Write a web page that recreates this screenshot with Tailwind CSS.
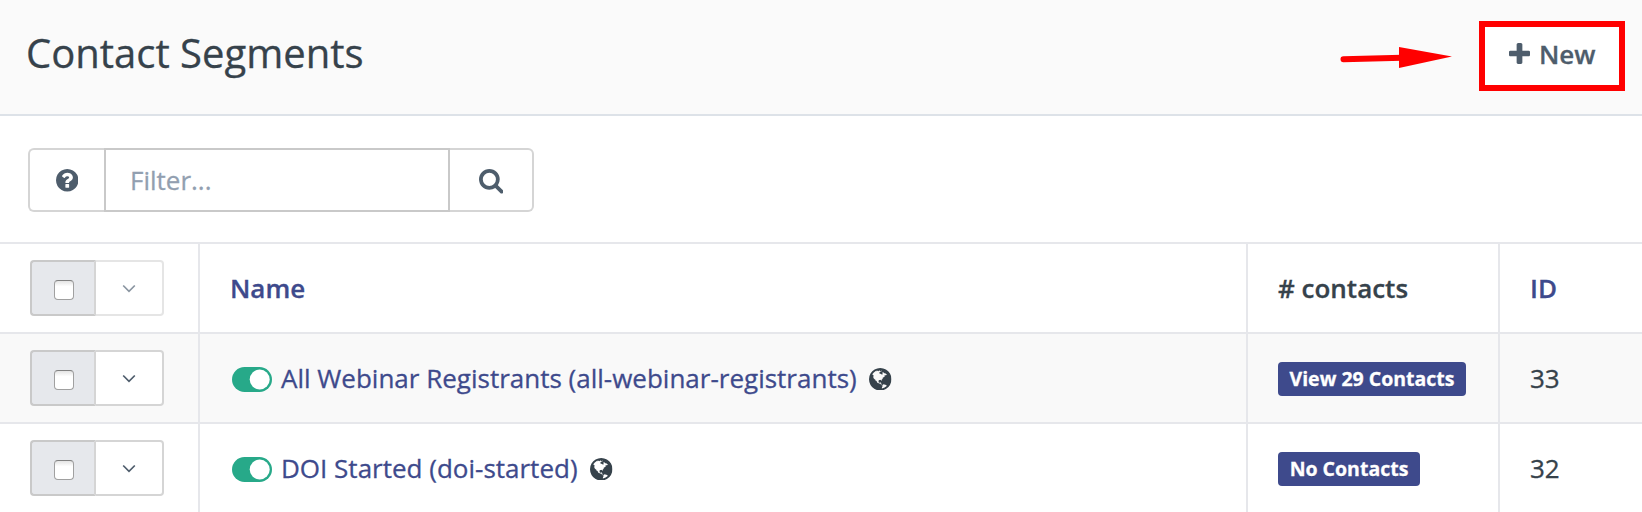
<!DOCTYPE html>
<html lang="en">
<head>
<meta charset="utf-8">
<title>Contact Segments</title>
<script src="https://cdn.jsdelivr.net/npm/@tailwindcss/browser@4"></script>
</head>
<body class="w-[1642px] h-[512px] overflow-hidden bg-white font-['Open_Sans',sans-serif] text-[26px] leading-[36px] text-[#36424b] [-webkit-text-stroke:0.3px]">
<svg class="hidden">
  <symbol id="globe" viewBox="128 128 1536 1536"><path d="M896 128q209 0 385.5 103t279.5 279.5 103 385.5-103 385.5-279.5 279.5-385.5 103-385.5-103-279.5-279.5-103-385.5 103-385.5 279.5-279.5 385.5-103zm274 521q-2 1-9.5 9.5t-13.5 9.5q2 0 4.5-5t5-11 3.5-7q6-7 22-15 14-6 52-12 34-8 51 11-2-2 9.5-13t14.5-12q3-2 15-4.5t15-7.5l2-22q-12 1-17.5-7t-6.5-21q0 2-6 8 0-7-4.5-8t-11.5 1-9 1q-10-3-15-7.5t-8-16.5-4-15q-2-5-9.5-11t-9.5-10q-1-2-2.5-5.5t-3-6.5-4-5.5-5.5-2.5-7 5-7.5 10-4.5 5q-3-2-6-1.5t-4.5 1-4.5 3-5 3.5q-3 2-8.5 3t-8.5 2q15-5-1-11-10-4-16-3 9-4 7.5-12t-8.5-14h5q-1-4-8.5-8.5t-17.5-8.5-13-6q-8-5-34-9.5t-33-.5q-5 6-4.5 10.5t4 14 3.5 12.5q1 6-5.5 13t-6.5 12q0 7 14 15.5t10 21.5q-3 8-16 16t-16 12q-5 8-1.5 18.5t10.5 16.5q2 2 1.5 4t-3.5 4.5-5.5 4-6.5 3.5l-3 2q-11 5-20.5-6t-13.5-26q-7-25-16-30-23-8-29 1-5-13-41-26-25-9-58-4 6-1 0-15-7-15-19-12 3-6 4-17.5t1-13.5q3-13 12-23 1-1 7-8.5t9.5-13.5.5-6q35 4 50-11 5-5 11.5-17t10.5-17q9-6 14-5.5t14.5 5.5 14.5 5q14 1 15.5-11t-7.5-20q12 1 3-17-4-7-8-9-12-4-27 5-8 4 2 8-1-1-9.5 10.5t-16.5 17.5-16-5q-1-1-5.5-13.5t-9.5-13.5q-8 0-16 15 3-8-11-15t-24-8q19-12-8-27-7-4-20.5-5t-19.5 4q-5 7-5.5 11.5t5 8 10.5 5.5 11.5 4 8.5 3q14 10 8 14-2 1-8.5 3.5t-11.5 4.5-6 4q-3 4 0 14t-2 14q-5-5-9-17.5t-7-16.5q7 9-25 6l-10-1q-4 0-16 2t-20.5 1-13.5-8q-4-8 0-20 1-4 4-2-4-3-11-9.5t-10-8.5q-46 15-94 41 6 1 12-1 5-2 13-6.5t10-5.5q34-14 42-7l5-5q14 16 20 25-7-4-30-1-20 6-22 12 7 12 5 18-4-3-11.5-10t-14.5-11-15-5q-16 0-22 1-146 80-235 222 7 7 12 8 4 1 5 9t2.5 11 11.5-3q9 8 3 19 1-1 44 27 19 17 21 21 3 11-10 18-1-2-9-9t-9-4q-3 5 .5 18.5t10.5 12.5q-7 0-9.5 16t-2.5 35.5-1 23.5l2 1q-3 12 5.5 34.5t21.5 19.5q-13 3 20 43 6 8 8 9 3 2 12 7.5t15 10 10 10.5q4 5 10 22.5t14 23.5q-2 6 9.5 20t10.5 23q-1 0-2.5 1t-2.5 1q3 7 15.5 14t15.5 13q1 3 2 10t3 11 8 2q2-20-24-62-15-25-17-29-3-5-5.5-15.5t-4.5-14.5q2 0 6 1.5t8.5 3.5 7.5 4 2 3q-3 7 2 17.5t12 18.5 17 19 12 13q6 6 14 19.5t0 13.5q9 0 20 10.5t17 19.5q5 8 8 26t5 24q2 7 8.5 13.5t12.5 9.5l16 8 13 7q5 2 18.5 10.5t21.5 11.5q10 4 16 4t14.5-2.5 13.5-3.5q15-2 29 15t21 21q36 19 55 11-2 1 .5 7.5t8 15.5 9 14.5 5.5 8.5q5 6 18 15t18 15q6-4 7-9-3 8 7 20t18 10q14-3 14-32-31 15-49-18 0-1-2.5-5.5t-4-8.5-2.5-8.5 0-7.5 5-3q9 0 10-3.5t-2-12.5-4-13q-1-8-11-20t-12-15q-5 9-16 8t-16-9q0 1-1.5 5.5t-1.5 6.5q-13 0-15-1 1-3 2.5-17.5t3.5-22.5q1-4 5.5-12t7.5-14.5 4-12.5-4.5-9.5-17.5-2.5q-19 1-26 20-1 3-3 10.5t-5 11.5-9 7q-7 3-24 2t-24-5q-13-8-22.5-29t-9.5-37q0-10 2.5-26.5t3-25-5.5-24.5q3-2 9-9.5t10-10.5q2-1 4.5-1.5t4.5 0 4-1.5 3-6q-1-1-4-3-3-3-4-3 7 3 28.5-1.5t27.5 1.5q15 11 22-2 0-1-2.5-9.5t-.5-13.5q5 27 29 9 3 3 15.5 5t17.5 5q3 2 7 5.5t5.5 4.5 5-.5 8.5-6.5q10 14 12 24 11 40 19 44 7 3 11 2t4.5-9.5 0-14-1.5-12.5l-1-8v-18l-1-8q-15-3-18.5-12t1.5-18.5 15-18.5q1-1 8-3.5t15.5-6.5 12.5-8q21-19 15-35 7 0 11-9-1 0-5-3t-7.5-5-4.5-2q9-5 2-16 5-3 7.5-11t7.5-10q9 12 21 2 7-8 1-16 5-7 20.5-10.5t18.5-9.5q7 2 8-2t1-12 3-12q4-5 15-9t13-5l17-11q3-4 0-4 18 2 31-11 10-11-6-20 3-6-3-9.5t-15-5.5q3-1 11.5-.5t10.5-1.5q15-10-7-16-17-5-43 12zm-163 877q206-36 351-189-3-3-12.5-4.5t-12.5-3.5q-18-7-24-8 1-7-2.5-13t-8-9-12.5-8-11-7q-2-2-7-6t-7-5.5-7.5-4.5-8.5-2-10 1l-3 1q-3 1-5.5 2.5t-5.5 3-4 3 0 2.5q-21-17-36-22-5-1-11-5.5t-10.5-7-10-1.5-11.5 7q-5 5-6 15t-2 13q-7-5 0-17.5t2-18.5q-3-6-10.5-4.5t-12 4.5-11.5 8.5-9 6.5-8.5 5.5-8.5 7.5q-3 4-6 12t-5 11q-2-4-11.5-6.5t-9.5-5.5q2 10 4 35t5 38q7 31-12 48-27 25-29 40-4 22 12 26 0 7-8 20.5t-7 21.5q0 6 2 16z"/></symbol>
  <symbol id="toggle" viewBox="0 0 40 25"><rect width="40" height="25" rx="12.5"/><circle cx="27.7" cy="12.5" r="10" fill="#fff"/></symbol>
  <symbol id="chevron" viewBox="0 0 14 9"><path d="M1.200 1.500 7 7.300l5.800-5.800" fill="none" stroke="currentColor" stroke-width="1.700"/></symbol>
</svg>

<header class="flex h-[116px] items-start justify-between border-b-2 border-[#dde2e8] bg-[#fafafa] pl-[26px] pr-[17px]">
  <h1 class="pt-[25px] text-[40px] leading-[56px]">Contact Segments</h1>
  <div class="flex pt-[21px]">
    <svg class="mt-[25px] mr-[27px] h-[24px] w-[112px]" viewBox="0 0 112 24" fill="#f00"><path d="M3.500 13.200 62 11.800" stroke="#f00" stroke-width="6" stroke-linecap="round"/><path d="M59 1 112 10.500 59 22z"/></svg>
    <button class="flex h-[70px] w-[146px] items-center border-6 border-[#f00] bg-white pl-[24px] font-semibold text-[#4e5d6c]">
      <svg class="mb-[5px] mr-[9px] size-[21px]" viewBox="192 128 1408 1408" fill="currentColor"><path d="M1600 736v192q0 40-28 68t-68 28h-416v416q0 40-28 68t-68 28h-192q-40 0-68-28t-28-68v-416h-416q-40 0-68-28t-28-68v-192q0-40 28-68t68-28h416v-416q0-40 28-68t68-28h192q40 0 68 28t28 68v416h416q40 0 68 28t28 68z"/></svg>
      <span class="mb-[5px]">New</span>
    </button>
  </div>
</header>

<div class="flex h-[126px] px-[28px] pt-[32px]">
  <div class="flex h-[64px] w-[506px]">
    <button class="flex w-[76px] items-center justify-center rounded-l-[6px] border-2 border-r-0 border-[#d5d5d5] text-[#4e5d6c]">
      <svg class="mt-[1px] size-[22.500px]" viewBox="128 128 1536 1536" fill="currentColor"><path d="M1024 1376v-192q0-14-9-23t-23-9h-192q-14 0-23 9t-9 23v192q0 14 9 23t23 9h192q14 0 23-9t9-23zm256-672q0-88-55.500-163t-138.500-116-170-41q-243 0-371 213-15 24 8 42l132 100q7 6 19 6 16 0 25-12 53-68 86-92 34-24 86-24 48 0 85.500 26t37.500 59q0 38-20 61t-68 45q-63 28-115.500 86.500t-52.500 125.500v36q0 14 9 23t23 9h192q14 0 23-9t9-23q0-19 21.500-49.500t54.500-49.500q32-18 49-28.500t46-35 44.500-48 28-60.500 12.500-81zm384 192q0 209-103 385.500t-279.500 279.500-385.500 103-385.500-103-279.500-279.500-103-385.500 103-385.500 279.500-279.500 385.500-103 385.500 103 279.500 279.500 103 385.500z"/></svg>
    </button>
    <input type="text" placeholder="Filter..." class="w-[346px] border-2 border-[#c9c9c9] pl-[24px] placeholder:text-[#929fb0]">
    <button class="flex w-[84px] items-center rounded-r-[6px] border-2 border-l-0 border-[#d5d5d5] pl-[28.500px] text-[#4e5d6c]">
      <svg class="mt-[3px] size-[24.500px]" viewBox="64 128 1664 1664" fill="currentColor"><path d="M1216 832q0-185-131.500-316.500t-316.500-131.500-316.500 131.500-131.500 316.500 131.500 316.500 316.500 131.500 316.500-131.500 131.500-316.500zm512 832q0 52-38 90t-90 38q-54 0-90-38l-343-342q-179 124-399 124-143 0-273.500-55.500t-225-150-150-225-55.500-273.500 55.500-273.500 150-225 225-150 273.500-55.500 273.500 55.500 225 150 150 225 55.500 273.500q0 220-124 399l343 343q37 37 37 90z"/></svg>
    </button>
  </div>
</div>

<main class="w-[1642px]">
  <div class="grid h-[90px] grid-cols-[200px_1048px_252px_142px] border-t-2 border-[#e6e7eb] font-semibold *:flex *:items-center">
    <div class="border-r-2 border-[#e6e7eb] pl-[30px]">
      <div class="flex h-[56px] w-[134px]">
        <span class="flex w-[66px] rounded-l-[4px] border-2 border-[#c9c9c9] border-r-[#d5d5d5] bg-[#e6e8ec] pl-[22px] pt-[18px]"><input type="checkbox" class="size-[20px] appearance-none rounded-[4px] border-[1.500px] border-[#a0a0a0] border-t-[#808080] bg-linear-to-b from-[#e4e4e4] to-white to-30%"></span>
        <button class="flex w-[68px] items-center rounded-r-[4px] border-2 border-l-0 border-[#e5e5e5] bg-white pl-[26px] text-[#8a95a1]"><svg class="h-[9px] w-[14px]"><use href="#chevron"/></svg></button>
      </div>
    </div>
    <div class="border-r-2 border-[#e6e7eb] pl-[30px] text-[#3e4a8c]">Name</div>
    <div class="border-r-2 border-[#e6e7eb] pl-[30px]"># contacts</div>
    <div class="pl-[30px] text-[#3e4a8c]">ID</div>
  </div>

  <div class="grid h-[90px] grid-cols-[200px_1048px_252px_142px] border-t-2 border-[#e6e7eb] bg-[#f9f9f9] *:flex *:items-center">
    <div class="border-r-2 border-[#e6e7eb] pl-[30px]">
      <div class="flex h-[56px] w-[134px]">
        <span class="flex w-[66px] rounded-l-[4px] border-2 border-[#c9c9c9] border-r-[#d5d5d5] bg-[#e6e8ec] pl-[22px] pt-[18px]"><input type="checkbox" class="size-[20px] appearance-none rounded-[4px] border-[1.500px] border-[#a0a0a0] border-t-[#808080] bg-linear-to-b from-[#e4e4e4] to-white to-30%"></span>
        <button class="flex w-[68px] items-center rounded-r-[4px] border-2 border-l-0 border-[#d5d5d5] bg-white pl-[26px] text-[#4e5d6c]"><svg class="h-[9px] w-[14px]"><use href="#chevron"/></svg></button>
      </div>
    </div>
    <div class="border-r-2 border-[#e6e7eb] pl-[32px]">
      <svg class="mt-[3px] mr-[9px] h-[25px] w-[40px]" fill="#27a989"><use href="#toggle"/></svg>
      <a class="text-[#3e4a8c]">All Webinar Registrants (all-webinar-registrants)</a>
      <svg class="mt-[2px] ml-[12.500px] size-[22.500px]" fill="currentColor"><use href="#globe"/></svg>
    </div>
    <div class="border-r-2 border-[#e6e7eb] pl-[30px]"><a class="mt-[2px] flex h-[34px] w-[188px] items-center justify-center rounded-[4px] bg-[#3e4a8c] text-[19.500px] font-bold text-white text-shadow-2xs">View 29 Contacts</a></div>
    <div class="pl-[30px]">33</div>
  </div>

  <div class="grid h-[90px] grid-cols-[200px_1048px_252px_142px] border-t-2 border-[#e6e7eb] *:flex *:items-center">
    <div class="border-r-2 border-[#e6e7eb] pl-[30px]">
      <div class="flex h-[56px] w-[134px]">
        <span class="flex w-[66px] rounded-l-[4px] border-2 border-[#c9c9c9] border-r-[#d5d5d5] bg-[#e6e8ec] pl-[22px] pt-[18px]"><input type="checkbox" class="size-[20px] appearance-none rounded-[4px] border-[1.500px] border-[#a0a0a0] border-t-[#808080] bg-linear-to-b from-[#e4e4e4] to-white to-30%"></span>
        <button class="flex w-[68px] items-center rounded-r-[4px] border-2 border-l-0 border-[#d5d5d5] bg-white pl-[26px] text-[#4e5d6c]"><svg class="h-[9px] w-[14px]"><use href="#chevron"/></svg></button>
      </div>
    </div>
    <div class="border-r-2 border-[#e6e7eb] pl-[32px]">
      <svg class="mt-[3px] mr-[9px] h-[25px] w-[40px]" fill="#27a989"><use href="#toggle"/></svg>
      <a class="text-[#3e4a8c]">DOI Started (doi-started)</a>
      <svg class="mt-[2px] ml-[12.500px] size-[22.500px]" fill="currentColor"><use href="#globe"/></svg>
    </div>
    <div class="border-r-2 border-[#e6e7eb] pl-[30px]"><a class="mt-[2px] flex h-[34px] w-[142px] items-center justify-center rounded-[4px] bg-[#3e4a8c] text-[19.500px] font-bold text-white text-shadow-2xs">No Contacts</a></div>
    <div class="pl-[30px]">32</div>
  </div>
</main>
</body>
</html>
